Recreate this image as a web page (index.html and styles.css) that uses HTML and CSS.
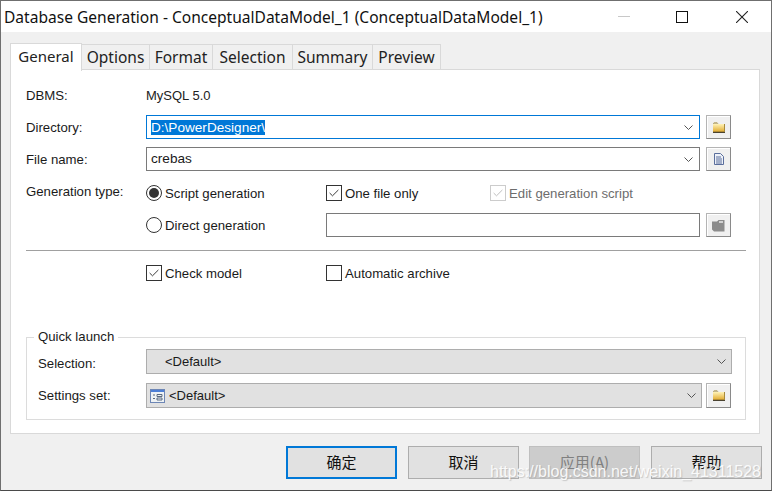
FILE: index.html
```html
<!DOCTYPE html>
<html lang="en">
<head>
<meta charset="utf-8">
<title>Database Generation</title>
<link rel="stylesheet" href="styles.css">
</head>
<body>
<svg class="defs" width="0" height="0" aria-hidden="true">
  <defs>
    <linearGradient id="folderFill" x1="0" y1="0" x2="0" y2="1">
      <stop offset="0" stop-color="#fff3b8"/>
      <stop offset="1" stop-color="#e0a92c"/>
    </linearGradient>
    <symbol id="chev" viewBox="0 0 9 5"><path d="M.5.5 4.5 4.5 8.5.5" fill="none" stroke="#555" stroke-width="1"/></symbol>
    <symbol id="check" viewBox="0 0 16 16"><path d="M3 8 6.3 11.2 13 4.5" fill="none" stroke="currentColor" stroke-width="1.1"/></symbol>
    <symbol id="folder" viewBox="0 0 12 11">
      <path d="M.5 2.500V1.200L1.200.5H4L5 1.500H.5Z" fill="#e9d28c" stroke="#a89a6a" stroke-width=".6"/>
      <rect x="0" y="2" width="12" height="8" fill="url(#folderFill)"/>
      <rect x="0" y="9.700" width="12" height="1.300" fill="#4a4330"/>
      <rect x="11" y="2" width="1" height="8" fill="#a88a3c"/>
    </symbol>
  </defs>
</svg>
<main class="window">
  <header class="titlebar">
    <h1 class="title">Database Generation - ConceptualDataModel_1 (ConceptualDataModel_1)</h1>
    <div class="controls">
      <span class="ctl"><svg width="12" height="2"><rect y="0" width="12" height="1" fill="#c8c8c8"/></svg></span>
      <span class="ctl ctl-max"><svg width="12" height="12"><rect x=".5" y=".5" width="11" height="11" fill="none" stroke="#111"/></svg></span>
      <span class="ctl"><svg width="12" height="12"><path d="M0 0 12 12M12 0 0 12" stroke="#222" stroke-width="1.100"/></svg></span>
    </div>
  </header>

  <nav class="tabs">
    <span class="tab tab-active">General</span>
    <span class="tab">Options</span>
    <span class="tab">Format</span>
    <span class="tab">Selection</span>
    <span class="tab">Summary</span>
    <span class="tab">Preview</span>
  </nav>

  <section class="panel">
    <div class="row">
      <span class="label">DBMS:</span>
      <span class="value">MySQL 5.0</span>
    </div>
    <div class="row">
      <span class="label">Directory:</span>
      <div class="field field-focus"><span class="selected">D:\PowerDesigner\</span><svg class="chev"><use href="#chev"/></svg></div>
      <button class="mini" type="button"><svg width="12" height="11"><use href="#folder"/></svg></button>
    </div>
    <div class="row">
      <span class="label">File name:</span>
      <div class="field"><span class="field-text">crebas</span><svg class="chev"><use href="#chev"/></svg></div>
      <button class="mini" type="button">
        <svg width="10" height="12" viewBox="0 0 10 12"><path d="M.5.5H6.500L9.500 3.500V11.500H.5Z" fill="#eef1f8" stroke="#5a6e9c"/><path d="M2 4H7M2 6H8M2 8H8M2 10H8" stroke="#5a6e9c"/></svg>
      </button>
    </div>
    <div class="row row-gen">
      <span class="label label-up">Generation type:</span>
      <label class="opt opt-a"><span class="radio radio-on"></span>Script generation</label>
      <label class="opt opt-b"><span class="box"><svg width="14" height="14"><use href="#check"/></svg></span>One file only</label>
      <label class="opt opt-dis"><span class="box box-dis"><svg width="14" height="14"><use href="#check"/></svg></span>Edit generation script</label>
    </div>
    <div class="row">
      <span class="label"></span>
      <label class="opt opt-a"><span class="radio"></span>Direct generation</label>
      <div class="field field-plain"></div>
      <button class="mini" type="button">
        <svg width="13" height="13" viewBox="0 0 13 13"><path d="M0 2.500H5L6.500 1H12.500V12.500H2L0 10.500Z" fill="#8c8c8c"/><path d="M7 3H11" stroke="#f0f0f0" stroke-width="1.400"/></svg>
      </button>
    </div>
    <hr class="sep">
    <div class="row">
      <span class="label"></span>
      <label class="opt opt-a"><span class="box"><svg width="14" height="14"><use href="#check"/></svg></span>Check model</label>
      <label class="opt opt-b"><span class="box"></span>Automatic archive</label>
    </div>
    <fieldset class="group">
      <legend class="legend">Quick launch</legend>
      <div class="grow">
        <span class="glabel glabel-low">Selection:</span>
        <div class="combo combo-wide"><span class="combo-text">&lt;Default&gt;</span><svg class="chev"><use href="#chev"/></svg></div>
      </div>
      <div class="grow">
        <span class="glabel">Settings set:</span>
        <div class="combo">
          <svg class="set-icon" width="15" height="14" viewBox="0 0 15 14"><rect x=".5" y=".5" width="14" height="13" fill="#eef2f4" stroke="#6d86b5"/><rect x="1" y="1" width="13" height="2" fill="#4d7fd6"/><path d="M3 6H5M3 9.500H5M7 5.500H12V7.500H7ZM7 9H12V11H7Z" fill="none" stroke="#5a6a80"/></svg>
          <span>&lt;Default&gt;</span><svg class="chev"><use href="#chev"/></svg>
        </div>
        <button class="mini mini-tall" type="button"><svg width="12" height="11"><use href="#folder"/></svg></button>
      </div>
    </fieldset>
  </section>

  <footer class="footer">
    <button class="btn btn-default" type="button">确定</button>
    <button class="btn" type="button">取消</button>
    <button class="btn btn-dis" type="button">应用(A)</button>
    <button class="btn" type="button">帮助</button>
  </footer>
  <div class="watermark">https://blog.csdn.net/weixin_41311528</div>
</main>
</body>
</html>
```
FILE: styles.css
```css
* { box-sizing: border-box; }
html, body { margin: 0; padding: 0; background: #f0f0f0; }
.defs { position: absolute; }
.window {
  position: relative;
  width: 772px;
  height: 491px;
  display: flex;
  flex-direction: column;
  background: #f0f0f0;
  border: 1px solid #6f6f6f;
  border-bottom-color: #4a4a4a;
  font: 13.2px "Liberation Sans", Arial, sans-serif;
  color: #1a1a1a;
  overflow: hidden;
}
.titlebar {
  height: 31px;
  flex: none;
  display: flex;
  align-items: center;
  background: #fff;
  padding-left: 3px;
}
.title {
  margin: 0;
  font: 400 15.55px "Noto Sans", sans-serif;
  color: #111;
  white-space: nowrap;
  flex: 1;
}
.controls { display: flex; height: 100%; }
.ctl {
  width: 59px;
  display: flex;
  align-items: center;
  justify-content: center;
}
.ctl-max { padding-right: 2px; }
.tabs {
  flex: none;
  display: grid;
  grid-template-columns: 72px 68px 63px 80px 80px 68px;
  justify-content: start;
  align-items: end;
  height: 38px;
  padding-left: 9px;
  position: relative;
  z-index: 1;
}
.tab {
  height: 26px;
  display: flex;
  align-items: center;
  justify-content: center;
  background: #f0f0f0;
  border: 1px solid #d9d9d9;
  border-left: 0;
  font: 15.5px "Noto Sans", sans-serif;
  color: #222;
}
.tab-active {
  height: 28px;
  margin-bottom: -1px;
  padding-bottom: 3px;
  background: #fff;
  border-left: 1px solid #d9d9d9;
  border-bottom: 0;
  font-size: 15px;
}
.panel {
  flex: none;
  height: 364px;
  margin: 0 11px 0 9px;
  padding: 13px 13px 0 15px;
  background: #fff;
  border: 1px solid #d9d9d9;
  border-top-width: 0;
  box-shadow: 0 -1px 0 #d9d9d9;
}
.row {
  display: flex;
  align-items: center;
  height: 24px;
  margin-bottom: 8px;
}
.row-gen { margin-top: 10px; }
.label { width: 120px; flex: none; }
.label-up { align-self: flex-start; padding-top: 3px; }
.value { color: #222; font-size: 13px; }
.field {
  width: 554px;
  height: 24px;
  flex: none;
  display: flex;
  align-items: center;
  justify-content: space-between;
  padding: 0 5px 0 4px;
  border: 1px solid #7a7a7a;
  background: #fff;
  font-size: 13.6px;
}
.field-text { padding-bottom: 2px; }
.field-focus { border-color: #0078d7; }
.field-plain { width: 374px; }
.selected { background: #0078d7; color: #fff; line-height: 15px; }
.chev { width: 9px; height: 5px; margin-right: 1px; flex: none; }
.mini {
  width: 25px;
  height: 24px;
  margin-left: 6px;
  padding: 0;
  flex: none;
  display: flex;
  align-items: center;
  justify-content: center;
  background: #f0f0f0;
  border: 1px solid;
  border-color: #b4b4b4 #8a8a8a #8a8a8a #b4b4b4;
  box-shadow: inset 1px 1px 0 #fff;
}
.mini-tall { height: 25px; margin-left: 4px; }
.opt {
  display: flex;
  align-items: center;
  flex: none;
  white-space: nowrap;
}
.opt-a { width: 180px; }
.opt-b { width: 164px; }
.opt-dis { color: #6d6d6d; }
.box {
  width: 16px;
  height: 16px;
  margin-right: 3px;
  display: flex;
  align-items: center;
  justify-content: center;
  border: 1px solid #333;
  background: #fff;
  color: #333;
}
.box-dis { border-color: #ccc; color: #bbb; }
.radio {
  width: 16px;
  height: 16px;
  margin-right: 3px;
  border: 1px solid #333;
  border-radius: 50%;
  background: #fff;
  position: relative;
  flex: none;
}
.radio-on::after {
  content: "";
  position: absolute;
  inset: 2px;
  border-radius: 50%;
  background: #333;
}
.sep {
  height: 1px;
  margin: 13px 0 10px;
  border: 0;
  background: #a0a0a0;
}
.group {
  margin: 44px 0 0;
  padding: 4px 14px 11px 11px;
  min-width: 0;
  border: 1px solid #dcdcdc;
  height: 91px;
}
.legend {
  margin-left: -4px;
  padding: 0 4px;
  height: 16px;
  line-height: 16px;
}
.grow { display: flex; align-items: center; height: 25px; margin-bottom: 9px; }
.glabel { width: 108px; flex: none; }
.glabel-low { margin-top: 4px; }
.combo {
  width: 556px;
  height: 25px;
  flex: none;
  display: flex;
  align-items: center;
  padding: 0 4px 0 3px;
  background: #e1e1e1;
  border: 1px solid #adadad;
  font-size: 13px;
}
.combo-wide { width: 586px; }
.combo-text { padding-left: 15px; }
.combo .chev { margin-left: auto; }
.set-icon { margin-right: 4px; flex: none; }
.footer {
  flex: none;
  display: flex;
  justify-content: flex-end;
  gap: 11px;
  margin-top: 12px;
  padding-right: 9px;
}
.btn {
  width: 111px;
  height: 33px;
  padding: 0 0 2px;
  background: #e1e1e1;
  border: 1px solid #adadad;
  font: 15px "Noto Sans CJK SC", sans-serif;
  color: #111;
}
.btn-default { border: 2px solid #0078d7; }
.btn-dis { margin-left: -1px; background: #cccccc; border-color: #bfbfbf; color: #808080; }
.watermark {
  position: absolute;
  left: 489px;
  top: 462px;
  font: 16px "Liberation Sans", sans-serif;
  color: rgba(255, 255, 255, 0.9);
  text-shadow: 1px 1px 1px rgba(130, 130, 130, 0.35);
  white-space: nowrap;
  pointer-events: none;
}
```
